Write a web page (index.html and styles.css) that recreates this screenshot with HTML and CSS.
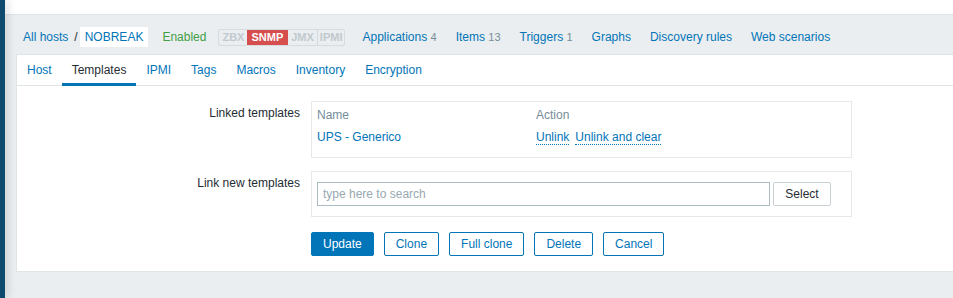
FILE: index.html
```html
<!DOCTYPE html>
<html>
<head>
<meta charset="utf-8">
<link rel="stylesheet" href="styles.css">
</head>
<body>
<div class="page">
  <div class="sidebar"></div>
  <div class="main">
    <div class="topbar"></div>
    <div class="nav">
      <a class="link crumb">All hosts</a>
      <span class="sep">/</span>
      <a class="link current">NOBREAK</a>
      <span class="enabled">Enabled</span>
      <span class="status">
        <span class="st">ZBX</span><span class="st red">SNMP</span><span class="st">JMX</span><span class="st">IPMI</span>
      </span>
      <a class="link item">Applications <span class="cnt">4</span></a>
      <a class="link item">Items <span class="cnt">13</span></a>
      <a class="link item">Triggers <span class="cnt">1</span></a>
      <a class="link item">Graphs</a>
      <a class="link item">Discovery rules</a>
      <a class="link item">Web scenarios</a>
    </div>
    <div class="box">
      <ul class="tabs">
        <li><a class="link">Host</a></li>
        <li class="active"><a>Templates</a></li>
        <li><a class="link">IPMI</a></li>
        <li><a class="link">Tags</a></li>
        <li><a class="link">Macros</a></li>
        <li><a class="link">Inventory</a></li>
        <li><a class="link">Encryption</a></li>
      </ul>
      <div class="form">
        <div class="label">Linked templates</div>
        <div class="field">
          <table class="linked">
            <thead>
              <tr><th class="col-name">Name</th><th>Action</th></tr>
            </thead>
            <tbody>
              <tr>
                <td><a class="link">UPS - Generico</a></td>
                <td><a class="link action">Unlink</a><a class="link action">Unlink and clear</a></td>
              </tr>
            </tbody>
          </table>
        </div>
        <div class="label">Link new templates</div>
        <div class="field search">
          <input class="input" type="text" placeholder="type here to search">
          <button class="select">Select</button>
        </div>
        <div></div>
        <div class="buttons">
          <button class="btn primary">Update</button>
          <button class="btn">Clone</button>
          <button class="btn">Full clone</button>
          <button class="btn">Delete</button>
          <button class="btn">Cancel</button>
        </div>
      </div>
    </div>
  </div>
</div>
</body>
</html>
```

FILE: styles.css
```css
* { box-sizing: border-box; }
html, body { margin: 0; padding: 0; }
body {
  background: #ebeef0;
  font-family: "Liberation Sans", Arial, sans-serif;
  font-size: 12px;
  color: #1f2c33;
  overflow: hidden;
  height: 298px;
}
.page { display: flex; height: 298px; }
.sidebar {
  width: 5px;
  flex: 0 0 5px;
  background: #0d4a6d;
  position: relative;
  z-index: 2;
  box-shadow: 2px 0 9px rgba(30, 50, 60, 0.22);
}
.main { flex: 1; min-width: 0; }
.topbar {
  height: 15px;
  background: #fff;
  border-bottom: 1px solid #dfe4e7;
}
.link { color: #0275b8; text-decoration: none; cursor: pointer; }
.nav {
  display: flex;
  align-items: center;
  height: 39px;
  padding: 12px 0 7px 18px;
  white-space: nowrap;
}
.sep { margin: 0 2px 0 6px; color: #1f2c33; }
.current {
  background: #fff;
  height: 20px;
  line-height: 20px;
  padding: 0 5px;
}
.enabled { color: #429e47; margin-left: 14px; }
.status {
  display: flex;
  margin-left: 12px;
  margin-right: -2px;
  border: 1px solid #d5dbde;
  border-radius: 2px;
  height: 17px;
}
.st {
  font-size: 11px;
  font-weight: bold;
  line-height: 15px;
  color: #c0c9ce;
  padding: 0 3px;
  border-left: 1px solid #d5dbde;
}
.st:first-child { border-left: none; }
.st.red { background: #d64e4e; color: #fff; border-left-color: #d64e4e; padding: 0 4px 0 3px; }
.st.red + .st { border-left-color: #d64e4e; }
.st:last-child { padding: 0 2px; }
.item { margin-left: 19px; }
.cnt { color: #768d99; font-size: 11px; }
.box {
  background: #fff;
  border: 1px solid #dfe4e7;
  margin: 0 -30px 0 11px;
  padding-bottom: 15px;
}
.tabs {
  list-style: none;
  margin: 0;
  padding: 0;
  display: flex;
  border-bottom: 1px solid #dfe4e7;
  height: 31px;
}
.tabs li {
  height: 31px;
  padding: 0 10px;
  border-bottom: 3px solid transparent;
  margin-bottom: -1px;
}
.tabs li a { display: block; line-height: 14px; padding-top: 8px; }
.tabs li.active { border-bottom-color: #0275b8; }
.tabs li.active a { color: #1f2c33; }
.form {
  display: grid;
  grid-template-columns: 283px 541px;
  column-gap: 11px;
  padding-top: 15px;
}
.label { text-align: right; padding-top: 5px; line-height: 14px; }
.field {
  border: 1px solid #e5e9eb;
  margin-bottom: 13px;
}
.linked {
  border-collapse: collapse;
  margin: 0 5px;
}
.linked th {
  text-align: left;
  font-weight: normal;
  color: #768d99;
  line-height: 14px;
  padding: 6px 0 4px;
}
.linked th.col-name { width: 219px; }
.linked td { line-height: 14px; padding: 4px 0 13px; }
.action {
  border-bottom: 1px dotted #0275b8;
  margin-right: 6px;
}
.search {
  display: flex;
  padding: 10px 5px 10px 5px;
  margin-bottom: 15px;
}
.input {
  width: 453px;
  height: 24px;
  border: 1px solid #acbbc2;
  padding: 0 5px;
  font-family: inherit;
  font-size: 12px;
  color: #1f2c33;
  outline: none;
}
.input::placeholder { color: #97a8b1; }
.select {
  margin-left: 3px;
  width: 58px;
  height: 24px;
  background: #fff;
  border: 1px solid #c9d1d5;
  border-radius: 2px;
  font-family: inherit;
  font-size: 12px;
  color: #1f2c33;
  padding: 0;
}
.buttons { display: flex; gap: 10px; }
.btn {
  height: 24px;
  padding: 0 11px;
  background: #fff;
  border: 1px solid #0275b8;
  border-radius: 2px;
  color: #0275b8;
  font-family: inherit;
  font-size: 12px;
}
.btn.primary { background: #0275b8; color: #fff; }
```
